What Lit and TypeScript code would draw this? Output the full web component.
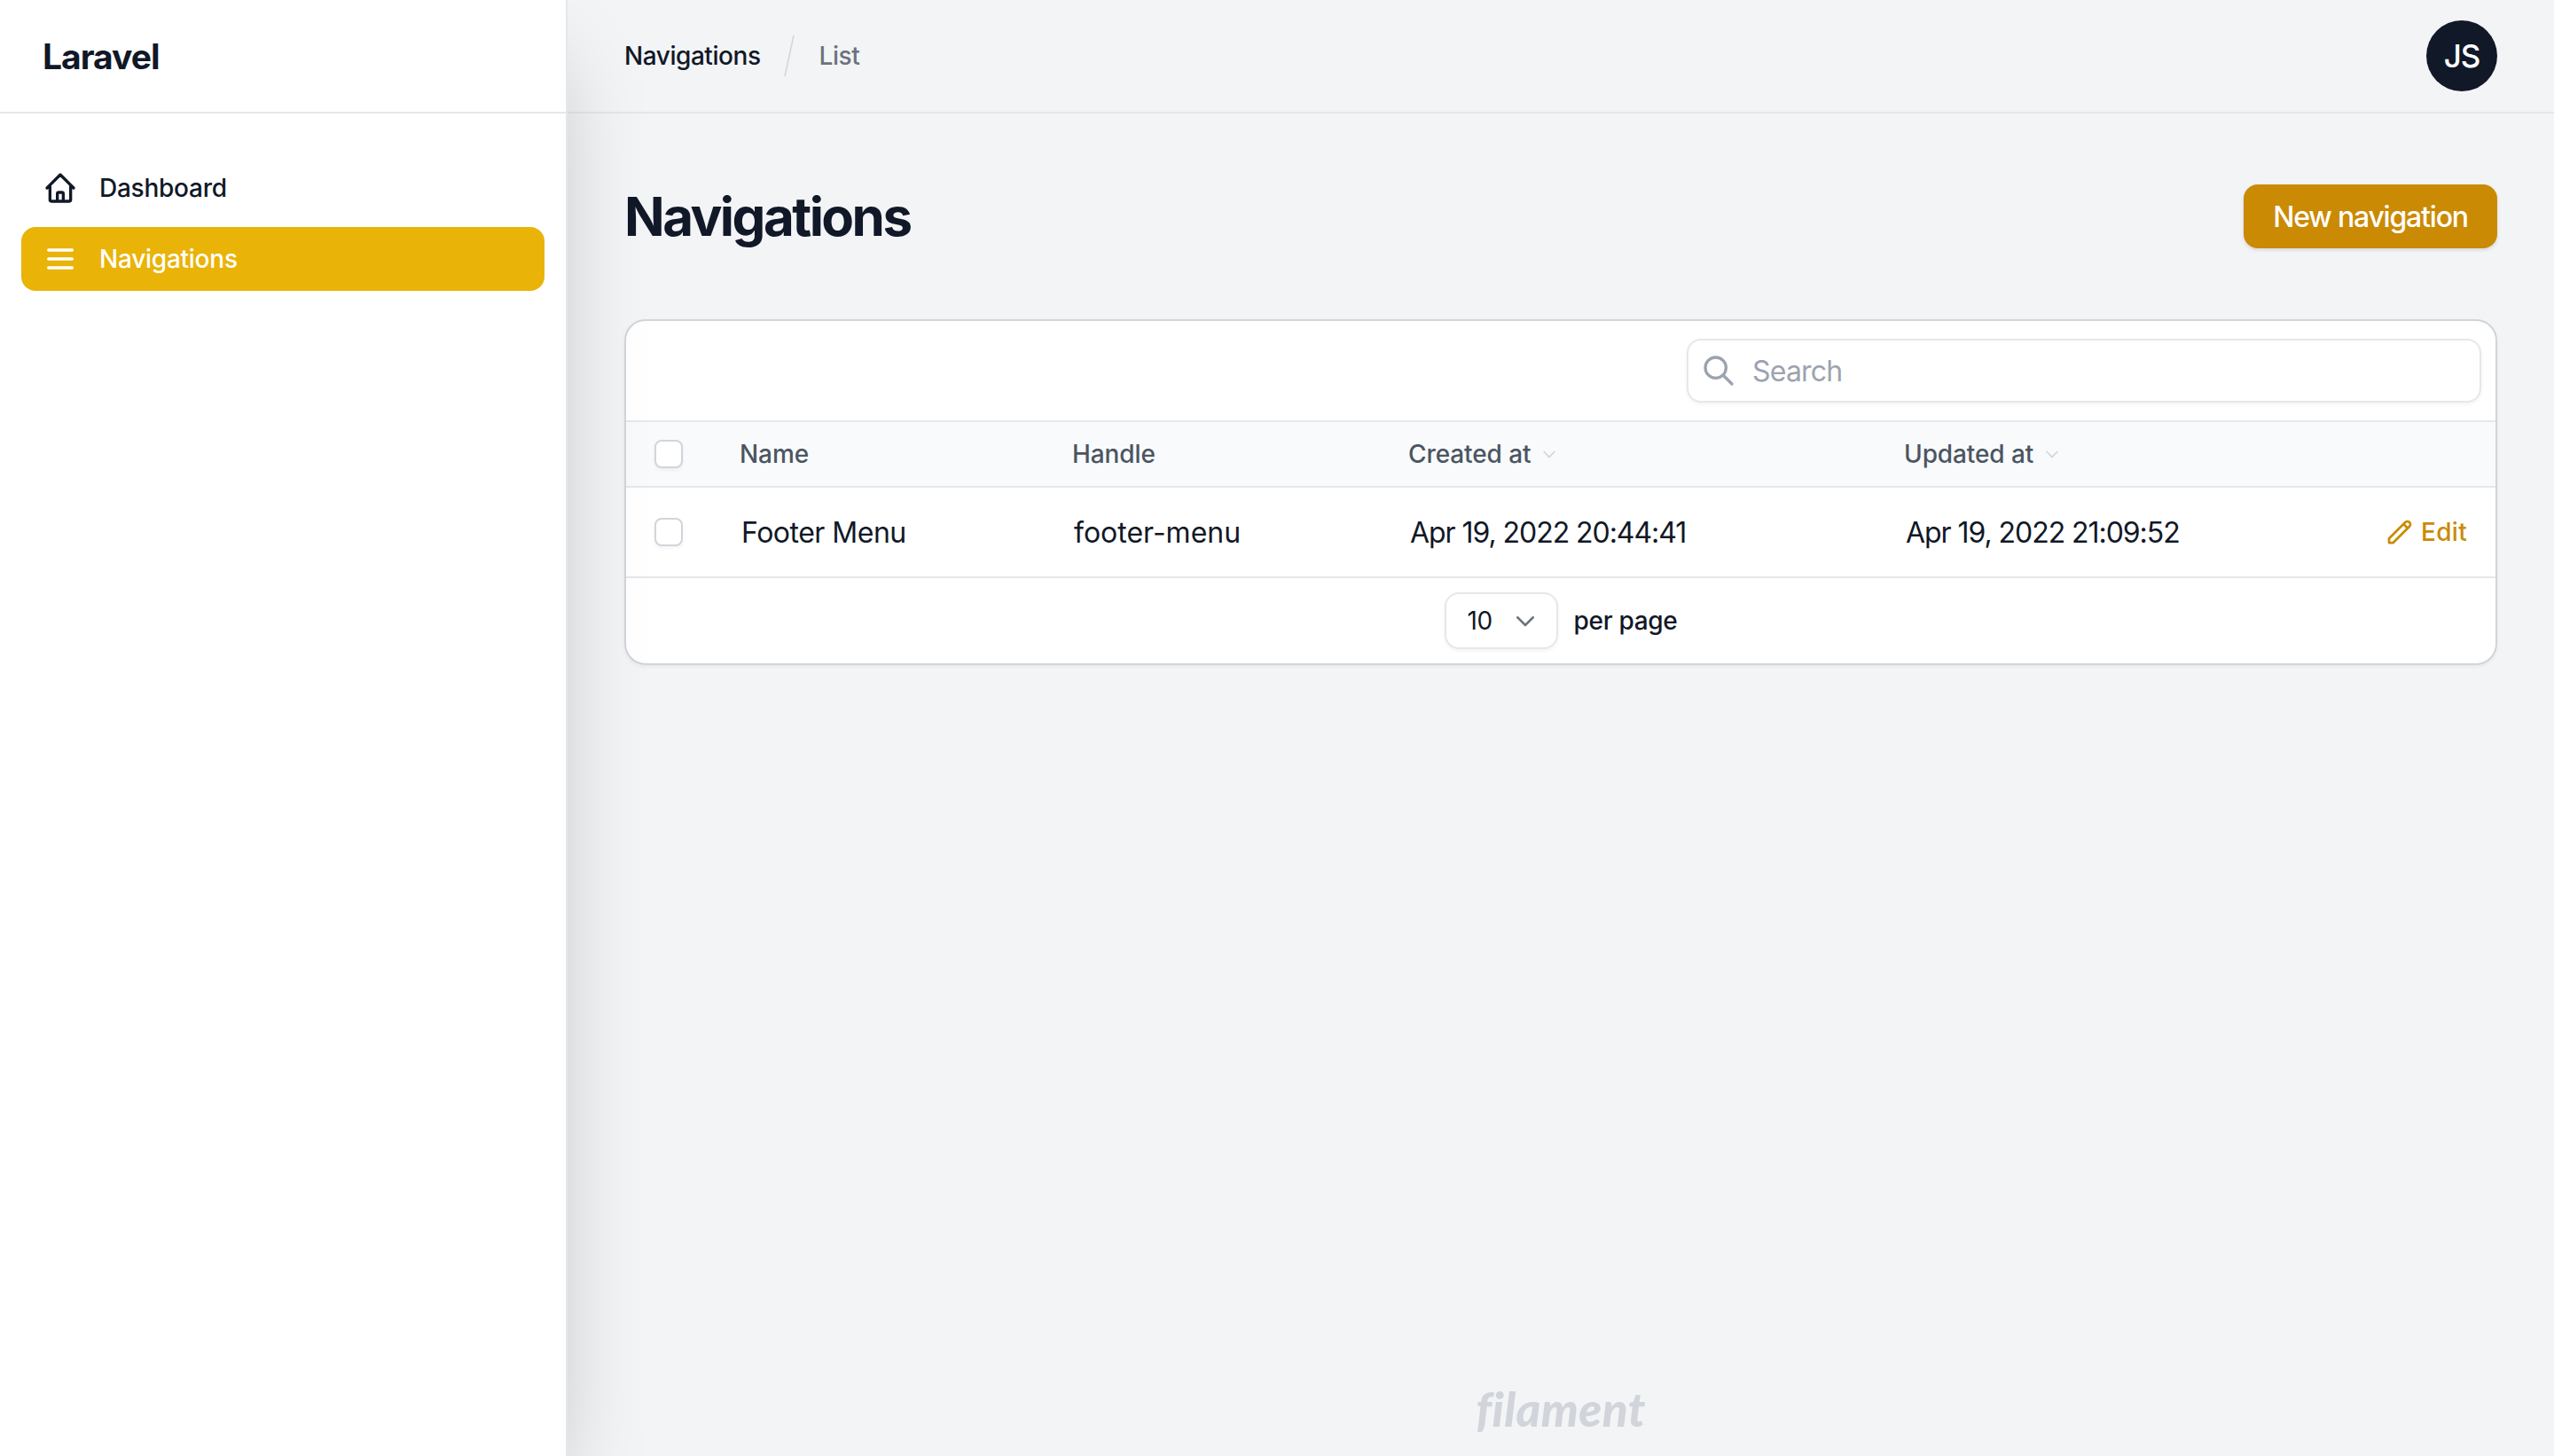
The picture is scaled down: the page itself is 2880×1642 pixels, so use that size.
import { html, css, LitElement, svg } from "lit";
import { customElement } from "lit/decorators.js";

type NavItem = {
	label: string;
	path: string;
	active: boolean;
};

type Row = {
	name: string;
	handle: string;
	created: string;
	updated: string;
};

const icons = {
	home: "M3 12l2-2m0 0l7-7 7 7M5 10v10a1 1 0 001 1h3m10-11l2 2m-2-2v10a1 1 0 01-1 1h-3m-6 0a1 1 0 001-1v-4a1 1 0 011-1h2a1 1 0 011 1v4a1 1 0 001 1m-6 0h6",
	menu: "M4 6h16M4 12h16M4 18h16",
	search: "M21 21l-6-6m2-5a7 7 0 11-14 0 7 7 0 0114 0z",
	pencil: "M15.232 5.232l3.536 3.536m-2.036-5.036a2.5 2.5 0 113.536 3.536L6.5 21.036H3v-3.572L16.732 3.732z",
	chevron: "M19 9l-7 7-7-7",
};

const icon = (path: string, cls: string) =>
	html`<svg class=${cls} viewBox="0 0 24 24" fill="none" stroke="currentColor" stroke-width="2" stroke-linecap="round" stroke-linejoin="round">${svg`<path d=${path}></path>`}</svg>`;

@customElement("app-root")
export class AppRoot extends LitElement {
	static styles = css`
		:host {
			display: flex;
			min-height: 100vh;
			background: #f3f4f6;
			color: #111827;
			font-family: "Inter", "Noto Sans", sans-serif;
		}
		.sidebar {
			position: relative;
			z-index: 1;
			flex: none;
			width: 640px;
			box-sizing: border-box;
			background: #fff;
			border-right: 2px solid #e5e7eb;
			box-shadow: 0 50px 100px -24px rgba(0, 0, 0, 0.25);
		}
		.brand {
			height: 128px;
			box-sizing: border-box;
			display: flex;
			align-items: center;
			padding-left: 48px;
			border-bottom: 2px solid #e5e7eb;
			font-size: 39px;
			font-weight: 700;
			letter-spacing: -1px;
		}
		.nav {
			display: flex;
			flex-direction: column;
			gap: 8px;
			padding: 48px 24px;
		}
		.nav-item {
			height: 72px;
			display: flex;
			align-items: center;
			gap: 24px;
			padding: 0 24px;
			border-radius: 16px;
			font-size: 28px;
			font-weight: 500;
			letter-spacing: -0.25px;
		}
		.nav-item.active {
			background: #eab308;
			color: #fff;
		}
		.nav-icon {
			width: 40px;
			height: 40px;
			flex: none;
		}
		.main {
			flex: 1;
			min-width: 0;
			display: flex;
			flex-direction: column;
		}
		.topbar {
			height: 128px;
			box-sizing: border-box;
			display: flex;
			align-items: center;
			justify-content: space-between;
			padding: 0 64px;
			border-bottom: 2px solid #e5e7eb;
			font-size: 28px;
			font-weight: 500;
			letter-spacing: -0.45px;
		}
		.crumbs {
			display: flex;
			align-items: center;
		}
		.crumb-sep {
			width: 12px;
			height: 48px;
			margin: 0 28px 0 26px;
			flex: none;
		}
		.crumb-last {
			color: #6b7280;
		}
		.avatar {
			width: 80px;
			height: 80px;
			border-radius: 50%;
			background: #111827;
			color: #fff;
			display: flex;
			align-items: center;
			justify-content: center;
			font-size: 35px;
			font-weight: 500;
			letter-spacing: -1px;
		}
		.content {
			flex: 1;
			display: flex;
			flex-direction: column;
			gap: 80px;
			padding: 80px 64px 0;
		}
		.page-head {
			display: flex;
			align-items: center;
			justify-content: space-between;
			height: 72px;
		}
		h1 {
			margin: 0;
			font-size: 60px;
			font-weight: 700;
			letter-spacing: -2.55px;
		}
		.new-btn {
			height: 72px;
			box-sizing: border-box;
			width: 286px;
			display: flex;
			align-items: center;
			justify-content: center;
			border-radius: 16px;
			background: #ca8a04;
			color: #fff;
			font-size: 32px;
			font-weight: 500;
			letter-spacing: -1.2px;
			box-shadow: 0 2px 4px rgba(0, 0, 0, 0.12);
		}
		.card {
			background: #fff;
			border: 2px solid #d1d5db;
			border-radius: 24px;
			box-shadow: 0 2px 4px rgba(0, 0, 0, 0.05);
			overflow: hidden;
		}
		.toolbar {
			height: 112px;
			box-sizing: border-box;
			display: flex;
			align-items: center;
			justify-content: flex-end;
			padding-right: 16px;
		}
		.search {
			width: 896px;
			height: 72px;
			box-sizing: border-box;
			display: flex;
			align-items: center;
			gap: 18px;
			padding-left: 14px;
			border: 2px solid #e5e7eb;
			border-radius: 16px;
			box-shadow: 0 2px 4px rgba(0, 0, 0, 0.05);
			color: #9ca3af;
			font-size: 32px;
			letter-spacing: -0.8px;
		}
		.search-icon {
			width: 40px;
			height: 40px;
		}
		.grid {
			display: grid;
			grid-template-columns: 96px 375px 379px 559px 1fr auto;
			align-items: center;
			border-top: 2px solid #e5e7eb;
		}
		.head {
			height: 74px;
			box-sizing: border-box;
			background: #f9fafb;
			color: #4b5563;
			font-size: 28px;
			font-weight: 500;
			letter-spacing: -0.1px;
		}
		.row {
			height: 102px;
			box-sizing: border-box;
			font-size: 32px;
		}
		.check-cell {
			padding-left: 32px;
			display: flex;
		}
		.check {
			width: 32px;
			height: 32px;
			box-sizing: border-box;
			background: #fff;
			border: 2px solid #d1d5db;
			border-radius: 8px;
			box-shadow: 0 2px 4px rgba(0, 0, 0, 0.05);
		}
		.cell {
			padding-left: 32px;
			display: flex;
			align-items: center;
		}
		.row .cell {
			padding-left: 34px;
		}
		.name {
			letter-spacing: -0.5px;
		}
		.handle {
			letter-spacing: 0;
		}
		.date {
			letter-spacing: -1.05px;
		}
		.sort {
			width: 20px;
			height: 20px;
			margin-left: 11px;
			color: #d1d5db;
		}
		.row .actions {
			gap: 8px;
			padding: 0 32px 0 0;
			color: #ca8a04;
			font-size: 28px;
			font-weight: 500;
			letter-spacing: 0.3px;
		}
		.edit-icon {
			width: 32px;
			height: 32px;
		}
		.pager {
			height: 98px;
			box-sizing: border-box;
			display: flex;
			align-items: center;
			justify-content: center;
			gap: 18px;
			border-top: 2px solid #e5e7eb;
			font-size: 28px;
			font-weight: 500;
			letter-spacing: -0.3px;
		}
		.select {
			width: 128px;
			height: 64px;
			box-sizing: border-box;
			display: flex;
			align-items: center;
			justify-content: space-between;
			padding: 0 23px 0 24px;
			border: 2px solid #e5e7eb;
			border-radius: 16px;
			box-shadow: 0 2px 4px rgba(0, 0, 0, 0.05);
			font-weight: 400;
		}
		.select-icon {
			width: 30px;
			height: 30px;
			margin-right: -3px;
			color: #6b7280;
		}
		.footer {
			padding: 0 0 19px;
			text-align: center;
			color: #d1d5db;
			font-family: "Lato", sans-serif;
			font-size: 53px;
			font-weight: 900;
			font-style: italic;
			line-height: 68px;
			letter-spacing: 0.4px;
			font-variant-ligatures: none;
		}
	`;

	navItems: NavItem[] = [
		{ label: "Dashboard", path: icons.home, active: false },
		{ label: "Navigations", path: icons.menu, active: true },
	];

	rows: Row[] = [
		{
			name: "Footer Menu",
			handle: "footer-menu",
			created: "Apr 19, 2022 20:44:41",
			updated: "Apr 19, 2022 21:09:52",
		},
	];

	render() {
		return html`
			<aside class="sidebar">
				<div class="brand">Laravel</div>
				<nav class="nav">
					${this.navItems.map(
						(item) => html`<div class="nav-item ${item.active ? "active" : ""}">
							${icon(item.path, "nav-icon")}
							<span>${item.label}</span>
						</div>`
					)}
				</nav>
			</aside>
			<div class="main">
				<header class="topbar">
					<div class="crumbs">
						<span>Navigations</span>
						<svg class="crumb-sep" viewBox="0 0 12 48">
							<path d="M11 1L1 47" stroke="#d1d5db" stroke-width="1.5" fill="none"></path>
						</svg>
						<span class="crumb-last">List</span>
					</div>
					<div class="avatar">JS</div>
				</header>
				<div class="content">
					<div class="page-head">
						<h1>Navigations</h1>
						<div class="new-btn">New navigation</div>
					</div>
					<section class="card">
						<div class="toolbar">
							<div class="search">
								${icon(icons.search, "search-icon")}
								<span>Search</span>
							</div>
						</div>
						<div class="grid head">
							<div class="check-cell"><div class="check"></div></div>
							<div class="cell">Name</div>
							<div class="cell">Handle</div>
							<div class="cell">Created at ${icon(icons.chevron, "sort")}</div>
							<div class="cell">Updated at ${icon(icons.chevron, "sort")}</div>
						</div>
						${this.rows.map(
							(row) => html`<div class="grid row">
								<div class="check-cell"><div class="check"></div></div>
								<div class="cell name">${row.name}</div>
								<div class="cell handle">${row.handle}</div>
								<div class="cell date">${row.created}</div>
								<div class="cell date">${row.updated}</div>
								<div class="cell actions">${icon(icons.pencil, "edit-icon")}<span>Edit</span></div>
							</div>`
						)}
						<div class="pager">
							<div class="select">
								<span>10</span>
								${icon(icons.chevron, "select-icon")}
							</div>
							<span>per page</span>
						</div>
					</section>
				</div>
				<footer class="footer">filament</footer>
			</div>
		`;
	}
}
